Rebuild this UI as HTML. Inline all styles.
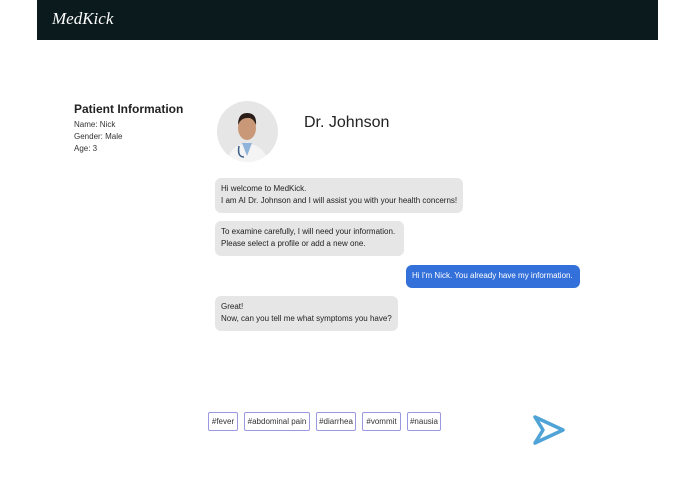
<!DOCTYPE html>
<html><head><style>
body{margin:0;width:695px;height:494px;background:#fff;font-family:"Liberation Sans","Noto Sans CJK KR",sans-serif;position:relative;overflow:hidden;color:#222}
.hdr{position:absolute;left:37px;top:0;width:621px;height:40px;background:#0b1a1d}
.logo{position:absolute;left:15px;top:9px;color:#fff;font-family:"Liberation Serif",serif;font-style:italic;font-size:17px}
.pi{position:absolute;left:74px;top:102px}
.pi h{display:block;font-size:12px;font-weight:bold;color:#222;margin-bottom:3px}
.pi div{font-size:8px;line-height:12px;color:#333}
.av{position:absolute;left:217px;top:101px;width:61px;height:61px;border-radius:50%;background:#e6e6e6;overflow:hidden}
.dr{position:absolute;left:304px;top:114px;font-size:16px;color:#222}
.b{position:absolute;background:#e6e6e6;border-radius:6px;font-size:8px;line-height:12px;padding:5px 6px;box-sizing:border-box;color:#222;white-space:nowrap}
.me{background:#3470d9;color:#fff}
.t{position:absolute;top:412px;height:19px;border:1px solid #9a98e0;border-radius:2px;font-size:8px;line-height:17px;text-align:center;box-sizing:border-box;color:#333;white-space:nowrap}
</style></head><body>
<div class="hdr"><div class="logo">MedKick</div></div>
<div class="pi"><h>Patient Information</h><div>Name: Nick</div><div>Gender: Male</div><div>Age: 3</div></div>
<div class="av"><svg width="61" height="61" viewBox="0 0 61 61">
<path d="M10 61 Q12 45 30 42 Q48 45 51 61Z" fill="#f4f4f4"/>
<path d="M25 42 L30 55 L35 42Z" fill="#8fb3d9"/>
<ellipse cx="30" cy="27" rx="9" ry="12" fill="#c89878"/>
<path d="M21 24 Q21 12 30 12 Q40 12 39 24 Q36 16 30 17 Q24 17 21 24Z" fill="#2a1d17"/>
<path d="M22 45 Q20 56 27 56" stroke="#3a5e8a" stroke-width="1.5" fill="none"/>
</svg></div>
<div class="dr">Dr. Johnson</div>
<div class="b" style="left:215px;top:178px;width:248px;height:35px">Hi welcome to MedKick.<br>I am AI Dr. Johnson and I will assist you with your health concerns!</div>
<div class="b" style="left:215px;top:221px;width:189px;height:35px">To examine carefully, I will need your information.<br>Please select a profile or add a new one.</div>
<div class="b me" style="left:406px;top:265px;width:174px;height:23px">Hi I'm Nick. You already have my information.</div>
<div class="b" style="left:215px;top:296px;width:183px;height:35px">Great!<br>Now, can you tell me what symptoms you have?</div>
<div class="t" style="left:208px;width:30px">#fever</div>
<div class="t" style="left:244px;width:66px">#abdominal pain</div>
<div class="t" style="left:316px;width:40px">#diarrhea</div>
<div class="t" style="left:362px;width:39px">#vommit</div>
<div class="t" style="left:407px;width:34px">#nausia</div>
<svg style="position:absolute;left:532px;top:414px" width="34" height="32" viewBox="0 0 34 32"><path d="M3 3 L31 16 L3 29 L11 16 Z" fill="none" stroke="#4fa3d6" stroke-width="3.5" stroke-linejoin="round"/></svg>
</body></html>
